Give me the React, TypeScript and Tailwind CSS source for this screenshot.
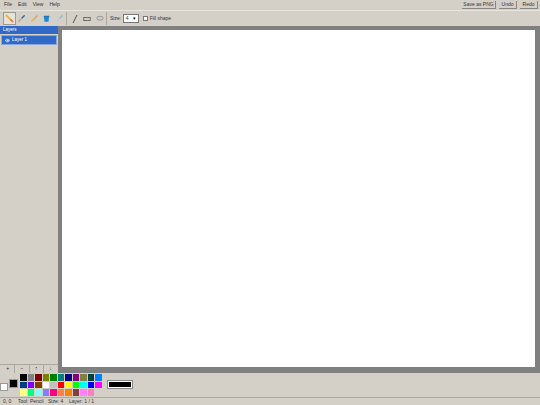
import { Eye } from 'lucide-react'

const palette = [
  '#000000', '#808080', '#800000', '#808000', '#008000', '#008080', '#000080', '#800080', '#808040', '#004040', '#0080ff',
  '#004080', '#8000ff', '#804000', '#ffffff', '#c0c0c0', '#ff0000', '#ffff00', '#00ff00', '#00ffff', '#0000ff', '#ff00ff',
  '#ffff80', '#00ff80', '#80ffff', '#8080ff', '#ff0080', '#ff8040', '#ff8000', '#804040', '#ff80ff', '#ff80c0',
]

function MenuBar() {
  return (
    <div className="h-[10px] flex items-center justify-between bg-[#d4d0c8] pl-1 pr-[2px] text-[5px] text-[#333]">
      <div className="flex gap-[6px]">
        <span>File</span>
        <span>Edit</span>
        <span>View</span>
        <span>Help</span>
      </div>
      <div className="flex gap-[3px]">
        <button className="h-[8px] w-[34px] bg-[#d4d0c8] border-r border-b border-[#8a8780] text-[5px]">Save as PNG</button>
        <button className="h-[8px] w-[18px] bg-[#d4d0c8] border-r border-b border-[#8a8780] text-[5px]">Undo</button>
        <button className="h-[8px] w-[18px] bg-[#d4d0c8] border-r border-b border-[#8a8780] text-[5px]">Redo</button>
      </div>
    </div>
  )
}

function ToolIcon({ a, b }: { a: string; b: string }) {
  // diagonal stroke, two tones
  return (
    <svg viewBox="0 0 10 10" className="w-[9px] h-[9px]">
      <path d="M8 2L5 5" stroke={a} strokeWidth="1.5" strokeLinecap="round" />
      <path d="M5 5L2 8" stroke={b} strokeWidth="1.5" strokeLinecap="round" />
    </svg>
  )
}

function ToolBar() {
  return (
    <div className="h-[16px] flex items-center bg-[#d4d0c8] border-t border-[#e8e5de] pl-[3px] text-[5px] text-[#333]">
      <div className="w-[64px] flex items-center border-r border-[#aaa79f]">
        <div className="w-[12.5px] h-[13px] flex items-center justify-center bg-[#e6e3dc] border border-[#9d9a92]">
          <svg viewBox="0 0 10 10" className="w-[9px] h-[9px]">
            <path d="M1.5 1.5L6.5 6.5" stroke="#e8b23a" strokeWidth="2" strokeLinecap="round" />
            <path d="M6.5 6.5L8.5 8.5" stroke="#e07a5a" strokeWidth="2" strokeLinecap="round" />
          </svg>
        </div>
        <div className="w-[12.5px] h-[13px] flex items-center justify-center">
          <ToolIcon a="#2c5fb0" b="#c9a66b" />
        </div>
        <div className="w-[12.5px] h-[13px] flex items-center justify-center">
          <ToolIcon a="#c9a66b" b="#e0b050" />
        </div>
        <div className="w-[12.5px] h-[13px] flex items-center justify-center">
          <svg viewBox="0 0 10 10" className="w-[9px] h-[9px]">
            <path d="M2 2.5H8L7.2 8.5H2.8Z" fill="#1e88d8" />
            <path d="M2 2.5H8" stroke="#0f5fa8" strokeWidth="1" />
          </svg>
        </div>
        <div className="w-[12.5px] h-[13px] flex items-center justify-center">
          <ToolIcon a="#8fb8c4" b="#a8d8e6" />
        </div>
      </div>
      <div className="w-[40px] flex items-center pl-[2px] border-r border-[#aaa79f]">
        <div className="w-[12.5px] h-[13px] flex items-center justify-center">
          <svg viewBox="0 0 10 10" className="w-[10px] h-[10px]">
            <path d="M7 1L3 9" stroke="#444" strokeWidth="0.9" />
          </svg>
        </div>
        <div className="w-[12.5px] h-[13px] flex items-center justify-center">
          <svg viewBox="0 0 10 10" className="w-[8px] h-[8px]">
            <rect x="1" y="3" width="8" height="4" fill="none" stroke="#555" strokeWidth="1" />
          </svg>
        </div>
        <div className="w-[12.5px] h-[13px] flex items-center justify-center">
          <svg viewBox="0 0 10 10" className="w-[8px] h-[8px]">
            <ellipse cx="5" cy="4" rx="4" ry="2.4" fill="none" stroke="#888" strokeWidth="1" />
          </svg>
        </div>
      </div>
      <span className="ml-[3px]">Size:</span>
      <div className="ml-[1.5px] w-[16px] h-[9px] flex items-center justify-between bg-white border border-[#777] px-[2px] text-[5px]">
        <span>4</span>
        <span className="text-[5px] text-black">▾</span>
      </div>
      <div className="ml-[4px] w-[5px] h-[5px] bg-white border border-[#777]" />
      <span className="ml-[2px]">Fill shape</span>
    </div>
  )
}

function LayersPanel() {
  return (
    <div className="w-[58px] flex flex-col bg-[#d4d0c8]">
      <div className="h-[8px] flex items-center bg-[#3169c6] pl-[3px] text-[4.5px] text-white">Layers</div>
      <div className="flex-1 px-[1px] pt-[1px]">
        <div className="h-[10px] flex items-center gap-[2px] bg-[#3169c6] border border-[#8aa8dc] pl-[3px] text-[4.5px] text-white">
          <Eye className="w-[5px] h-[5px]" strokeWidth={3} />
          <span>Layer 1</span>
        </div>
      </div>
      <div className="h-[9px] flex border-t border-[#aaa79f] px-[1px] text-[5px] text-[#222]">
        <div className="flex-1 flex items-center justify-center border-r border-[#aaa79f]">+</div>
        <div className="flex-1 flex items-center justify-center border-r border-[#aaa79f]">−</div>
        <div className="flex-1 flex items-center justify-center border-r border-[#aaa79f]">↑</div>
        <div className="flex-1 flex items-center justify-center">↓</div>
      </div>
    </div>
  )
}

function Palette() {
  return (
    <div className="h-[24px] flex bg-[#d4d0c8]">
      <div className="w-[20px] relative">
        <div className="absolute left-[9px] top-[6px] w-[9px] h-[9px] bg-black border border-[#999]" />
        <div className="absolute left-0 top-[10px] w-[8px] h-[8px] bg-white border border-[#999]" />
      </div>
      <div className="w-[84px] pt-[1px] grid grid-cols-[repeat(11,6.5px)] auto-rows-[6.5px] gap-[1px]">
        {palette.map((c, i) => (
          <div key={i} style={{ backgroundColor: c }} />
        ))}
      </div>
      <div className="ml-[3px] mt-[7px] w-[26px] h-[9px] flex items-center justify-center bg-white border border-[#888]">
        <div className="w-[22px] h-[5px] bg-black" />
      </div>
    </div>
  )
}

export default function App() {
  return (
    <div className="w-[540px] h-[405px] flex flex-col overflow-hidden bg-[#d4d0c8] font-['Liberation_Sans',sans-serif]">
      <MenuBar />
      <ToolBar />
      <div className="flex-1 flex min-h-0">
        <LayersPanel />
        <div className="flex-1 bg-[#808080] pl-[4px] pr-[5px] pt-[4px] pb-[6px]">
          <div className="w-full h-full bg-white" />
        </div>
      </div>
      <Palette />
      <div className="h-[8px] flex items-center border-t border-[#aaa79f] pl-[3px] text-[5px] text-[#333]">
        <span className="w-[15px]">0, 0</span>
        <span className="w-[30px]">Tool: Pencil</span>
        <span className="w-[21px]">Size: 4</span>
        <span>Layer: 1 / 1</span>
      </div>
    </div>
  )
}
